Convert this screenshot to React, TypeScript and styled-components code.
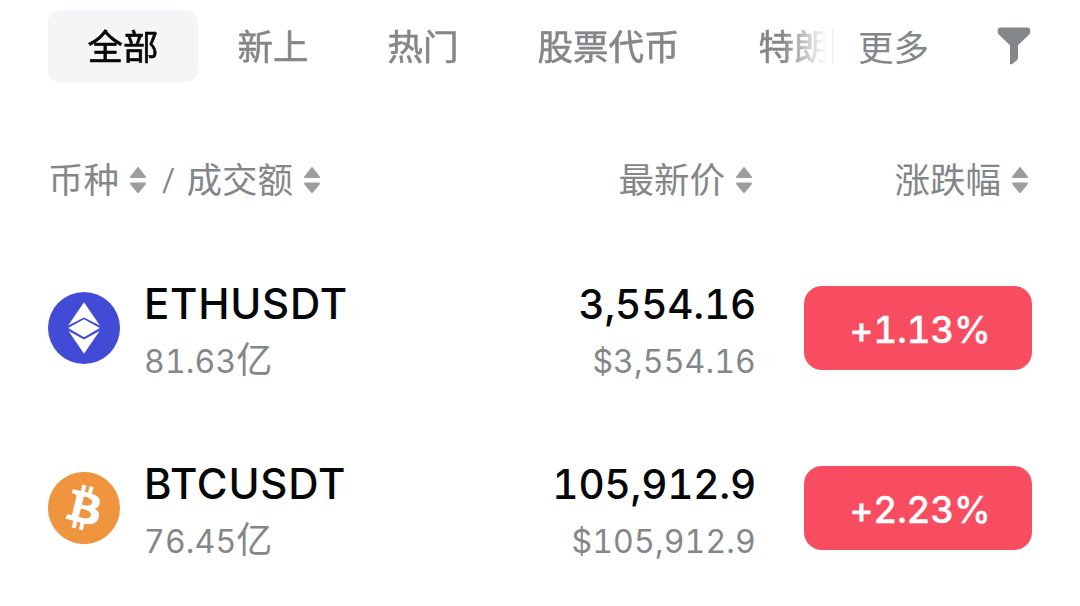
import { useState } from "react";
import styled, { createGlobalStyle } from "styled-components";
import { SiBitcoin } from "react-icons/si";

const Colors = {
	BLACK: "#060708",
	GREY: "#84878a",
	ARROW: "#9b9ea1",
	TAB: "#f4f5f6",
	RED: "#f84c60",
	ETH: "#414bd6",
	BTC: "#f0953f",
};

const GlobalStyle = createGlobalStyle`
	* {
		box-sizing: border-box;
	}

	body {
		margin: 0;
		background-color: #fff;
		font-family: Inter, "Noto Sans CJK SC", sans-serif;
		font-optical-sizing: none;
		color: ${Colors.BLACK};
	}
`;

const Market = styled.main`
	width: 1080px;
	height: 606px;
	padding: 10px 48px 0;
	overflow: hidden;
`;

const TabBar = styled.nav`
	display: flex;
	align-items: center;
	height: 72px;
`;

const TabList = styled.div`
	display: flex;
	width: 784px;
	overflow: hidden;
	mask-image: linear-gradient(to right, #000 734px, transparent 779px);
`;

const Tab = styled.button<{ $active: boolean }>`
	flex: none;
	height: 72px;
	padding: 0 39.5px 2px;
	border: none;
	border-radius: 12px;
	background-color: ${(p) => (p.$active ? Colors.TAB : "transparent")};
	color: ${(p) => (p.$active ? Colors.BLACK : Colors.GREY)};
	font-family: "Noto Sans CJK SC", sans-serif;
	font-size: 35.5px;
	line-height: 70px;
	-webkit-text-stroke: 0.6px currentColor;

	&:last-child {
		padding-right: 0;
	}
`;

const More = styled.div`
	display: flex;
	align-items: center;
	height: 36px;
	padding-left: 24px;
	border-left: 2px solid #f0f1f1;
	color: ${Colors.GREY};
	font-family: "Noto Sans CJK SC", sans-serif;
	font-size: 35.5px;
	line-height: 34px;
`;

const FilterIcon = styled.svg`
	width: 34px;
	height: 38px;
	margin: 0 1px 0 auto;
	fill: ${Colors.GREY};
`;

const columns = `
	display: grid;
	grid-template-columns: 1fr 350px 276px;
`;

const Header = styled.div`
	${columns}
	height: 60px;
	margin: 68px 0 28px;
	align-items: center;
	color: ${Colors.GREY};
	font-family: "Noto Sans CJK SC", sans-serif;
	font-size: 35.5px;
	line-height: 60px;
`;

const HeaderCell = styled.div<{ $end?: boolean }>`
	display: flex;
	align-items: center;
	justify-content: ${(p) => (p.$end ? "flex-end" : "flex-start")};
	padding-right: ${(p) => (p.$end ? "3px" : "0")};
`;

const Label = styled.span`
	height: 60px;
	line-height: 56px;
`;

const SortIcon = styled.svg`
	width: 18px;
	height: 28px;
	margin-left: 10px;
	fill: ${Colors.ARROW};
	stroke: ${Colors.ARROW};
	stroke-width: 2;
	stroke-linejoin: round;
`;

const Slash = styled.span`
	margin: 0 13px 0 16px;
	font-family: Inter, sans-serif;
	font-size: 29px;
	transform: skewX(-6deg);
`;

const Row = styled.div`
	${columns}
	height: 180px;
	align-items: center;
`;

const Pair = styled.div`
	display: flex;
	align-items: center;
`;

const Coin = styled.div`
	display: flex;
	width: 72px;
	height: 72px;
	margin-right: 24px;

	svg {
		width: 72px;
		height: 72px;
	}
`;

const Stack = styled.div<{ $end?: boolean }>`
	display: flex;
	flex-direction: column;
	align-items: ${(p) => (p.$end ? "flex-end" : "flex-start")};
	font-feature-settings: "tnum";
`;

const Symbol = styled.div`
	height: 58px;
	font-size: 42px;
	font-weight: 500;
	letter-spacing: 0.75px;
	line-height: 57px;
`;

const Price = styled.div`
	height: 58px;
	font-size: 40.5px;
	font-weight: 500;
	letter-spacing: -0.2px;
	line-height: 59px;
`;

const Sub = styled.div<{ $end?: boolean }>`
	height: 49px;
	padding-top: ${(p) => (p.$end ? "4px" : "0")};
	color: ${Colors.GREY};
	font-size: 32px;
	letter-spacing: 0.15px;
	line-height: 49px;

	span {
		font-family: "Noto Sans CJK SC", sans-serif;
		font-size: 36px;
	}
`;

const Change = styled.div`
	justify-self: end;
	width: 228px;
	height: 84px;
	padding-left: 4px;
	border-radius: 18px;
	background-color: ${Colors.RED};
	color: #fff;
	font-size: 37px;
	font-weight: 500;
	font-feature-settings: "tnum";
	letter-spacing: -0.3px;
	line-height: 88px;
	text-align: center;
	-webkit-text-stroke: 0.3px currentColor;
`;

const Sort = () => (
	<SortIcon viewBox="0 0 18 28">
		<path d="M9 2 L16 11 H2 Z" />
		<path d="M9 26 L16 17.5 H2 Z" />
	</SortIcon>
);

const EthIcon = () => (
	<svg viewBox="0 0 72 72">
		<circle cx="36" cy="36" r="36" fill={Colors.ETH} />
		<g fill="#fff">
			<path d="M36 10.3 L51.8 33.4 L36 25.4 L20.2 33.4 Z" />
			<path d="M36 27.3 L51.8 36 L36 45.3 L20.2 36 Z" />
			<path d="M36 47.5 L51.5 39 L36 61.8 L20.5 39 Z" />
		</g>
	</svg>
);

const tabs = ["全部", "新上", "热门", "股票代币", "特朗"];

const rows = [
	{
		symbol: "ETHUSDT",
		volume: "81.63",
		price: "3,554.16",
		change: "+1.13%",
		icon: <EthIcon />,
	},
	{
		symbol: "BTCUSDT",
		volume: "76.45",
		price: "105,912.9",
		change: "+2.23%",
		icon: <SiBitcoin color={Colors.BTC} />,
	},
];

const App: React.FC = () => {
	const [active, setActive] = useState(tabs[0]);

	return (
		<Market>
			<GlobalStyle />
			<TabBar>
				<TabList>
					{tabs.map((tab) => (
						<Tab
							key={tab}
							$active={tab === active}
							onClick={() => setActive(tab)}>
							{tab}
						</Tab>
					))}
				</TabList>
				<More>更多</More>
				<FilterIcon viewBox="0 0 34 38">
					<path d="M3 0.5 H31 Q33.3 0.5 33.3 3 V5 Q33.3 6.5 32 7.7 L21 18.3 V31 Q21 32.4 20 33.2 L15.2 37 Q13 38.2 13 36 V18.3 L2 7.7 Q0.7 6.5 0.7 5 V3 Q0.7 0.5 3 0.5 Z" />
				</FilterIcon>
			</TabBar>
			<Header>
				<HeaderCell>
					<Label>币种</Label>
					<Sort />
					<Slash>/</Slash>
					<Label>成交额</Label>
					<Sort />
				</HeaderCell>
				<HeaderCell $end>
					<Label>最新价</Label>
					<Sort />
				</HeaderCell>
				<HeaderCell $end>
					<Label>涨跌幅</Label>
					<Sort />
				</HeaderCell>
			</Header>
			{rows.map((row) => (
				<Row key={row.symbol}>
					<Pair>
						<Coin>{row.icon}</Coin>
						<Stack>
							<Symbol>{row.symbol}</Symbol>
							<Sub>
								{row.volume}
								<span>亿</span>
							</Sub>
						</Stack>
					</Pair>
					<Stack $end>
						<Price>{row.price}</Price>
						<Sub $end>${row.price}</Sub>
					</Stack>
					<Change>{row.change}</Change>
				</Row>
			))}
		</Market>
	);
};

export default App;
